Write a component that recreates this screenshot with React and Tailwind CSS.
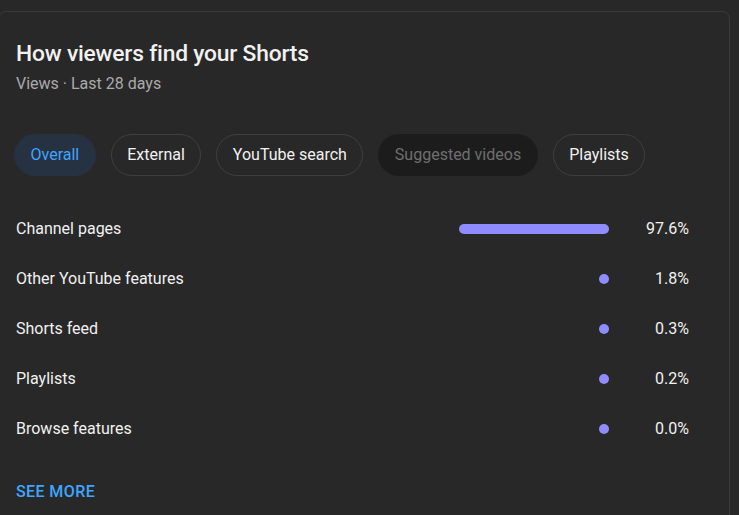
const tabs = [
  { label: 'Overall', kind: 'active' },
  { label: 'External', kind: 'normal' },
  { label: 'YouTube search', kind: 'normal' },
  { label: 'Suggested videos', kind: 'disabled' },
  { label: 'Playlists', kind: 'normal' },
]

const rows = [
  { name: 'Channel pages', pct: '97.6%', bar: true },
  { name: 'Other YouTube features', pct: '1.8%' },
  { name: 'Shorts feed', pct: '0.3%' },
  { name: 'Playlists', pct: '0.2%' },
  { name: 'Browse features', pct: '0.0%' },
]

const chipClass = {
  active: 'bg-[#263142] text-[#3ea6ff] border-transparent',
  normal: 'bg-transparent text-[#f1f1f1] border-[#3f3f3f]',
  disabled: 'bg-[#1c1c1c] text-[#6f6f6f] border-transparent',
}

export default function App() {
  return (
    <div className="w-[739px] h-[515px] overflow-hidden bg-[#282828] pt-[11px]" style={{ fontFamily: 'Roboto, "Liberation Sans", sans-serif' }}>
      <div className="ml-[-2px] w-[732px] h-[520px] border border-[#3a3a3a] rounded-lg bg-[#282828] pl-[17px] pr-[40px] pt-[27px]">
        <h2 className="text-[22.8px] leading-[30px] font-medium tracking-[-0.2px] text-[#f1f1f1]">How viewers find your Shorts</h2>
        <p className="mt-[4px] text-[16px] leading-[22px] text-[#aaaaaa]">Views · Last 28 days</p>

        <div className="flex gap-[15px] mt-[39px] ml-[-2px]">
          {tabs.map((t) => (
            <div
              key={t.label}
              className={`h-[42px] px-[15.5px] rounded-full border flex items-center text-[16px] ${chipClass[t.kind]}`}
            >
              {t.label}
            </div>
          ))}
        </div>

        <div className="mt-[28px]">
          {rows.map((r) => (
            <div key={r.name} className="h-[50px] flex items-center text-[16px] text-[#f1f1f1]">
              <span className="flex-1">{r.name}</span>
              <div className="w-[150px] flex justify-end">
                {r.bar ? (
                  <div className="w-[150px] h-[10px] rounded-full bg-[#8f8cff]" />
                ) : (
                  <div className="w-[10px] h-[10px] rounded-full bg-[#8f8cff]" />
                )}
              </div>
              <span className="w-[80px] text-right">{r.pct}</span>
            </div>
          ))}
        </div>

        <div className="mt-[26px] text-[16px] font-medium text-[#3ea6ff] tracking-wide">SEE MORE</div>
      </div>
    </div>
  )
}
